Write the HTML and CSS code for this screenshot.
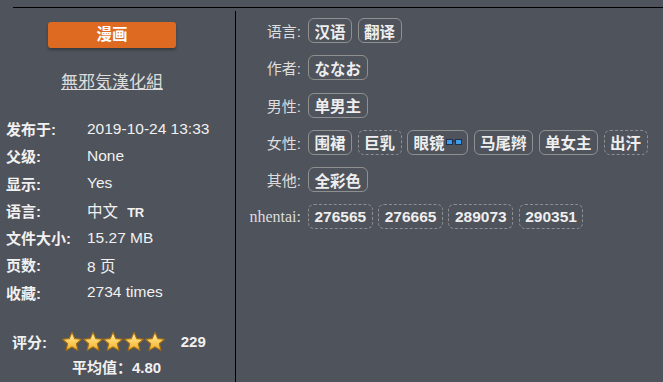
FILE: index.html
```html
<!DOCTYPE html>
<html lang="zh-CN">
<head>
  <meta charset="UTF-8" />
  <title>Gallery</title>
  <link rel="stylesheet" href="styles.css">
</head>
<body>
  <div class="topbar"></div>
  <div class="main">
    <div class="left">
      <div class="cat">漫画</div>
      <div class="group"><a href="#">無邪気漢化組</a></div>

      <table class="info">
        <tr><td class="k">发布于:</td><td>2019-10-24 13:33</td></tr>
        <tr><td class="k">父级:</td><td>None</td></tr>
        <tr><td class="k">显示:</td><td>Yes</td></tr>
        <tr><td class="k">语言:</td><td>中文 <span class="tr">TR</span></td></tr>
        <tr><td class="k">文件大小:</td><td>15.27 MB</td></tr>
        <tr><td class="k">页数:</td><td>8 页</td></tr>
        <tr><td class="k">收藏:</td><td>2734 times</td></tr>
      </table>

      <div class="rating">
        <span class="rk">评分:</span>
        <span class="stars">
          <svg viewBox="0 0 20 20">
            <defs>
              <linearGradient id="gold" x1="0" y1="0" x2="0" y2="1">
                <stop offset="0" stop-color="#fff1b8"/>
                <stop offset="0.45" stop-color="#fdd46a"/>
                <stop offset="1" stop-color="#f2ae2a"/>
              </linearGradient>
            </defs>
            <path d="M10 0.8L12.7 7.08 19.51 7.71 14.37 12.22 15.88 18.89 10 15.4 4.12 18.89 5.63 12.22 0.49 7.71 7.3 7.08Z"/>
          </svg>
          <svg viewBox="0 0 20 20"><path d="M10 0.8L12.7 7.08 19.51 7.71 14.37 12.22 15.88 18.89 10 15.4 4.12 18.89 5.63 12.22 0.49 7.71 7.3 7.08Z"/></svg>
          <svg viewBox="0 0 20 20"><path d="M10 0.8L12.7 7.08 19.51 7.71 14.37 12.22 15.88 18.89 10 15.4 4.12 18.89 5.63 12.22 0.49 7.71 7.3 7.08Z"/></svg>
          <svg viewBox="0 0 20 20"><path d="M10 0.8L12.7 7.08 19.51 7.71 14.37 12.22 15.88 18.89 10 15.4 4.12 18.89 5.63 12.22 0.49 7.71 7.3 7.08Z"/></svg>
          <svg viewBox="0 0 20 20"><path d="M10 0.8L12.7 7.08 19.51 7.71 14.37 12.22 15.88 18.89 10 15.4 4.12 18.89 5.63 12.22 0.49 7.71 7.3 7.08Z"/></svg>
        </span>
        <span class="count">229</span>
      </div>
      <div class="avg">平均值：4.80</div>
    </div>

    <div class="right">
      <div class="row">
        <div class="lbl">语言:</div>
        <div class="tags"><span class="tag">汉语</span><span class="tag">翻译</span></div>
      </div>
      <div class="row">
        <div class="lbl">作者:</div>
        <div class="tags"><span class="tag">ななお</span></div>
      </div>
      <div class="row">
        <div class="lbl">男性:</div>
        <div class="tags"><span class="tag">单男主</span></div>
      </div>
      <div class="row">
        <div class="lbl">女性:</div>
        <div class="tags">
          <span class="tag">围裙</span>
          <span class="tag dash">巨乳</span>
          <span class="tag">眼镜<svg class="glasses" viewBox="0 0 16 6"><rect x="0.5" y="0.5" width="6" height="5" fill="#3d9be9" stroke="#1b3350"/><rect x="9.5" y="0.5" width="6" height="5" fill="#3d9be9" stroke="#1b3350"/><rect x="6.5" y="1.5" width="3" height="1.2" fill="#1b3350"/></svg></span>
          <span class="tag">马尾辫</span>
          <span class="tag">单女主</span>
          <span class="tag dash">出汗</span>
        </div>
      </div>
      <div class="row">
        <div class="lbl">其他:</div>
        <div class="tags"><span class="tag">全彩色</span></div>
      </div>
      <div class="row">
        <div class="lbl serif">nhentai:</div>
        <div class="tags">
          <span class="tag dash">276565</span>
          <span class="tag dash">276665</span>
          <span class="tag dash">289073</span>
          <span class="tag dash">290351</span>
        </div>
      </div>
    </div>
  </div>
</body>
</html>
```

FILE: styles.css
```css
body {
  margin: 0;
  height: 382px;
  overflow: hidden;
  background: #4f535b;
  color: #f1f1f1;
  font-family: 'Liberation Sans', 'Noto Sans CJK SC', sans-serif;
  font-size: 15px;
}
.topbar {
  height: 7px;
  margin-left: 13px;
  border-bottom: 1px solid #000;
}
.main {
  display: flex;
  margin-top: 3px;
  height: 371px;
}
.left {
  width: 236px;
  border-right: 1px solid #000;
  padding-top: 11px;
  box-sizing: border-box;
}
.cat {
  width: 128px;
  height: 26px;
  margin-left: 48px;
  background: #dd6a20;
  border-radius: 3px;
  box-shadow: 0 2px 3px rgba(0, 0, 0, 0.3);
  color: #fff;
  font-weight: bold;
  font-size: 15.5px;
  line-height: 26px;
  text-align: center;
}
.group {
  width: 224px;
  margin-top: 25px;
  text-align: center;
  line-height: 20px;
  font-size: 17px;
}
.group a {
  color: #ddd;
}
.info {
  margin-top: 22px;
  margin-left: 6px;
  border-collapse: collapse;
}
.info td {
  padding: 0;
  height: 27.25px;
  font-size: 15.5px;
  white-space: nowrap;
}
.info td.k {
  width: 81px;
  font-size: 15px;
  font-weight: bold;
}
.tr {
  margin-left: 5px;
  font-size: 13px;
  font-weight: bold;
  letter-spacing: -0.5px;
}
.rating {
  display: flex;
  align-items: center;
  height: 22px;
  margin-top: 25px;
  padding-left: 12px;
  font-weight: bold;
}
.rk {
  width: 50px;
}
.stars {
  display: flex;
  gap: 0.7px;
}
.stars svg {
  width: 20px;
  height: 21px;
  fill: url(#gold);
  stroke: #a56d0e;
  stroke-width: 1.1;
  stroke-linejoin: round;
}
.count {
  margin-left: 16px;
}
.avg {
  margin-top: 5px;
  padding-left: 72px;
  line-height: 20px;
  font-weight: bold;
}
.right {
  flex: 1;
  padding-top: 7px;
  display: flex;
  flex-direction: column;
  gap: 12.3px;
}
.row {
  display: flex;
  align-items: center;
  height: 25px;
}
.lbl {
  width: 65px;
  text-align: right;
  color: #ddd;
  margin-right: 7px;
}
.lbl.serif {
  font-family: 'Liberation Serif', serif;
  font-size: 16px;
}
.tags {
  display: flex;
  gap: 5.5px;
}
.tag {
  display: flex;
  align-items: center;
  height: 23px;
  padding: 0 5.5px;
  border: 1px solid #8f8f8f;
  border-radius: 6px;
  font-weight: bold;
  font-size: 15.5px;
  color: #eee;
}
.tag.dash {
  border-style: dashed;
}
.glasses {
  width: 16px;
  height: 6px;
  margin-left: 1px;
}
```
